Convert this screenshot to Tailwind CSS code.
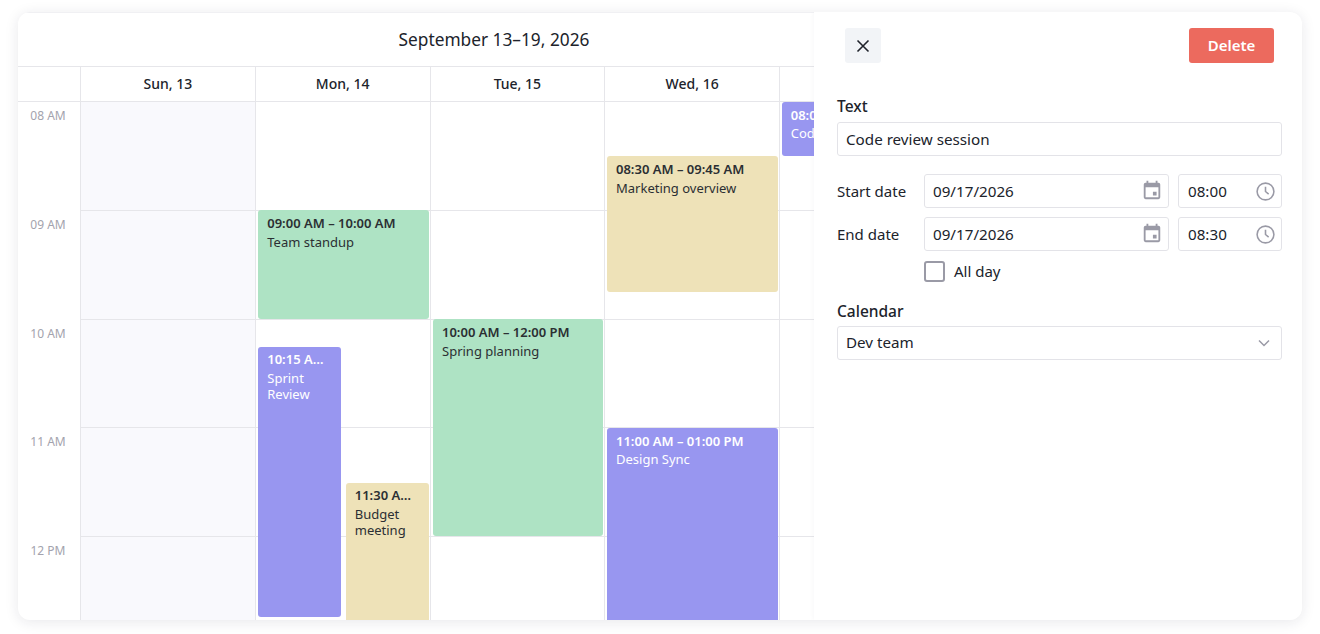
<!DOCTYPE html>
<html lang="en">
<head>
<meta charset="utf-8">
<title>Scheduler</title>
<script src="https://cdn.jsdelivr.net/npm/@tailwindcss/browser@4"></script>
</head>
<body class="bg-white overflow-hidden font-['Noto_Sans',sans-serif] text-[#20232b]">
<div class="w-[1320px] h-[634px] pt-[12px] px-[18px]">
  <!-- Card -->
  <div class="relative w-[1284px] h-[608px] rounded-xl bg-white overflow-hidden shadow-[0_2px_14px_rgba(30,30,60,0.10)]">
    <!-- Title -->
    <div class="w-[952px] h-[54px] flex items-center justify-center text-[17.3px] border-t border-[#f0f0f3]">September 13–19, 2026</div>

    <!-- Day headers -->
    <div class="flex h-[36px] border-y border-[#e6e6ea] w-[1300px] text-[14px] font-medium">
      <div class="w-[63px] shrink-0 border-r border-[#e6e6ea]"></div>
      <div class="w-[174.75px] shrink-0 border-r border-[#e6e6ea] flex items-center justify-center pb-[1px]">Sun, 13</div>
      <div class="w-[174.75px] shrink-0 border-r border-[#e6e6ea] flex items-center justify-center pb-[1px]">Mon, 14</div>
      <div class="w-[174.75px] shrink-0 border-r border-[#e6e6ea] flex items-center justify-center pb-[1px]">Tue, 15</div>
      <div class="w-[174.75px] shrink-0 border-r border-[#e6e6ea] flex items-center justify-center pb-[1px]">Wed, 16</div>
      <div class="w-[174.75px] shrink-0 flex items-center justify-center pb-[1px]">Thu, 17</div>
    </div>

    <!-- Grid -->
    <div class="flex w-[1300px]">
      <!-- Times -->
      <div class="w-[63px] shrink-0 border-r border-[#e6e6ea] text-[12px] text-[#a3a3ad] text-center pr-[2px]">
        <div class="h-[108.75px] pt-[5px]">08 AM</div>
        <div class="h-[108.75px] pt-[5px]">09 AM</div>
        <div class="h-[108.75px] pt-[5px]">10 AM</div>
        <div class="h-[108.75px] pt-[5px]">11 AM</div>
        <div class="h-[108.75px] pt-[5px]">12 PM</div>
      </div>

      <!-- Sun -->
      <div class="relative w-[174.75px] shrink-0 border-r border-[#e6e6ea] bg-[#f9f9fd]">
        <div class="h-[108.75px] border-b border-[#e6e6ea]"></div>
        <div class="h-[108.75px] border-b border-[#e6e6ea]"></div>
        <div class="h-[108.75px] border-b border-[#e6e6ea]"></div>
        <div class="h-[108.75px] border-b border-[#e6e6ea]"></div>
        <div class="h-[108.75px]"></div>
      </div>

      <!-- Mon -->
      <div class="relative w-[174.75px] shrink-0 border-r border-[#e6e6ea]">
        <div class="h-[108.75px] border-b border-[#e6e6ea]"></div>
        <div class="h-[108.75px] border-b border-[#e6e6ea]"></div>
        <div class="h-[108.75px] border-b border-[#e6e6ea]"></div>
        <div class="h-[108.75px] border-b border-[#e6e6ea]"></div>
        <div class="h-[108.75px]"></div>
        <div class="absolute left-[2.5px] top-[108px] w-[171px] h-[109px] rounded-[3px] bg-[#aee3c4] px-[9px] pt-[5px] text-[13px] leading-[16px] text-[#2b2f33]">
          <div class="font-semibold mb-[3px]">09:00 AM – 10:00 AM</div>
          <div>Team standup</div>
        </div>
        <div class="absolute left-[2.5px] top-[245px] w-[83px] h-[270px] rounded-[3px] bg-[#9896f0] px-[9px] pt-[4px] text-[13px] leading-[16px] text-white">
          <div class="font-semibold mb-[3px] truncate">10:15 AM – 12:45 PM</div>
          <div>Sprint Review</div>
        </div>
        <div class="absolute left-[90px] top-[381px] w-[83px] h-[200px] rounded-[3px] bg-[#eee2b8] px-[9px] pt-[4px] text-[13px] leading-[16px] text-[#2b2f33]">
          <div class="font-semibold mb-[3px] truncate">11:30 AM – 01:00 PM</div>
          <div>Budget meeting</div>
        </div>
      </div>

      <!-- Tue -->
      <div class="relative w-[174.75px] shrink-0 border-r border-[#e6e6ea]">
        <div class="h-[108.75px] border-b border-[#e6e6ea]"></div>
        <div class="h-[108.75px] border-b border-[#e6e6ea]"></div>
        <div class="h-[108.75px] border-b border-[#e6e6ea]"></div>
        <div class="h-[108.75px] border-b border-[#e6e6ea]"></div>
        <div class="h-[108.75px]"></div>
        <div class="absolute left-[2.5px] top-[217px] w-[170px] h-[217px] rounded-[3px] bg-[#aee3c4] px-[9px] pt-[5px] text-[13px] leading-[16px] text-[#2b2f33]">
          <div class="font-semibold mb-[3px]">10:00 AM – 12:00 PM</div>
          <div>Spring planning</div>
        </div>
      </div>

      <!-- Wed -->
      <div class="relative w-[174.75px] shrink-0 border-r border-[#e6e6ea]">
        <div class="h-[108.75px] border-b border-[#e6e6ea]"></div>
        <div class="h-[108.75px] border-b border-[#e6e6ea]"></div>
        <div class="h-[108.75px] border-b border-[#e6e6ea]"></div>
        <div class="h-[108.75px] border-b border-[#e6e6ea]"></div>
        <div class="h-[108.75px]"></div>
        <div class="absolute left-[1.75px] top-[54px] w-[171px] h-[136px] rounded-[3px] bg-[#eee2b8] px-[9px] pt-[5px] text-[13px] leading-[16px] text-[#2b2f33]">
          <div class="font-semibold mb-[3px]">08:30 AM – 09:45 AM</div>
          <div>Marketing overview</div>
        </div>
        <div class="absolute left-[1.75px] top-[326px] w-[171px] h-[218px] rounded-[3px] bg-[#9896f0] px-[9px] pt-[5px] text-[13px] leading-[16px] text-white">
          <div class="font-semibold mb-[2px]">11:00 AM – 01:00 PM</div>
          <div>Design Sync</div>
        </div>
      </div>

      <!-- Thu -->
      <div class="relative w-[174.75px] shrink-0">
        <div class="h-[108.75px] border-b border-[#e6e6ea]"></div>
        <div class="h-[108.75px] border-b border-[#e6e6ea]"></div>
        <div class="h-[108.75px] border-b border-[#e6e6ea]"></div>
        <div class="h-[108.75px] border-b border-[#e6e6ea]"></div>
        <div class="h-[108.75px]"></div>
        <div class="absolute left-[1.75px] top-0 w-[171px] h-[54px] rounded-[3px] bg-[#9896f0] px-[9px] pt-[5px] text-[13px] leading-[16px] text-white">
          <div class="font-semibold mb-[2px]">08:00 AM – 08:30 AM</div>
          <div>Code review session</div>
        </div>
      </div>
    </div>

    <!-- Edit panel -->
    <div class="absolute right-0 top-0 bottom-0 w-[488px] bg-white rounded-r-xl pl-[23px] pr-[20px] shadow-[-1px_0_4px_rgba(30,30,60,0.03)]">
      <div class="flex justify-between items-center pt-[16px] pl-[8px] pr-[8px]">
        <button class="w-[36px] h-[35px] rounded-[3px] bg-[#f2f4f7] flex items-center justify-center">
          <svg class="w-[14px] h-[14px]" viewBox="0 0 14 14" fill="none" stroke="#20232b" stroke-width="1.6"><path d="M1.5 1.5l11 11M12.5 1.5l-11 11"/></svg>
        </button>
        <button class="w-[85px] h-[35px] rounded-[3px] bg-[#ec6a5e] text-white text-[15px] font-semibold">Delete</button>
      </div>

      <div class="mt-[33px] text-[15.5px] font-medium leading-[20px]">Text</div>
      <input type="text" value="Code review session" class="mt-[6px] block w-[445px] h-[34px] border border-[#e3e3e8] rounded-[3px] pl-[8px] text-[15.2px] outline-none">

      <div class="mt-[18px] flex items-center h-[34px]">
        <div class="w-[87px] text-[15px] pt-[1px]">Start date</div>
        <div class="relative w-[245px]">
          <input type="text" value="09/17/2026" class="block w-full h-[34px] border border-[#e3e3e8] rounded-[3px] pl-[8px] text-[15.2px] outline-none">
          <svg class="absolute right-[6px] top-[5px] w-[22px] h-[22px]" viewBox="0 0 24 24" fill="#9a9aa6"><path d="M19 4h-1V2h-2v2H8V2H6v2H5a2 2 0 0 0-2 2v14a2 2 0 0 0 2 2h14a2 2 0 0 0 2-2V6a2 2 0 0 0-2-2zm0 16H5V9h14v11zm-6-6h4v4h-4z"/></svg>
        </div>
        <div class="relative w-[104px] ml-[9px]">
          <input type="text" value="08:00" class="block w-full h-[34px] border border-[#e3e3e8] rounded-[3px] pl-[9px] text-[15.2px] outline-none">
          <svg class="absolute right-[6.5px] top-[7px] w-[21px] h-[21px]" viewBox="0 0 20 20" fill="none" stroke="#9a9aa6" stroke-width="1.5"><circle cx="10" cy="10" r="8"/><path d="M10 5.5V10l3 2.5"/></svg>
        </div>
      </div>

      <div class="mt-[9px] flex items-center h-[34px]">
        <div class="w-[87px] text-[15px] pt-[1px]">End date</div>
        <div class="relative w-[245px]">
          <input type="text" value="09/17/2026" class="block w-full h-[34px] border border-[#e3e3e8] rounded-[3px] pl-[8px] text-[15.2px] outline-none">
          <svg class="absolute right-[6px] top-[5px] w-[22px] h-[22px]" viewBox="0 0 24 24" fill="#9a9aa6"><path d="M19 4h-1V2h-2v2H8V2H6v2H5a2 2 0 0 0-2 2v14a2 2 0 0 0 2 2h14a2 2 0 0 0 2-2V6a2 2 0 0 0-2-2zm0 16H5V9h14v11zm-6-6h4v4h-4z"/></svg>
        </div>
        <div class="relative w-[104px] ml-[9px]">
          <input type="text" value="08:30" class="block w-full h-[34px] border border-[#e3e3e8] rounded-[3px] pl-[9px] text-[15.2px] outline-none">
          <svg class="absolute right-[6.5px] top-[7px] w-[21px] h-[21px]" viewBox="0 0 20 20" fill="none" stroke="#9a9aa6" stroke-width="1.5"><circle cx="10" cy="10" r="8"/><path d="M10 5.5V10l3 2.5"/></svg>
        </div>
      </div>

      <div class="mt-[10px] ml-[87px] flex items-center h-[21px]">
        <div class="w-[21px] h-[21px] border-2 border-[#9a9aa6] rounded-[3px]"></div>
        <div class="ml-[9px] text-[15px]">All day</div>
      </div>

      <div class="mt-[19px] text-[15.5px] font-medium leading-[20px]">Calendar</div>
      <div class="relative mt-[5px] w-[445px]">
        <select class="block w-full h-[34px] appearance-none border border-[#e3e3e8] rounded-[3px] pl-[8px] pb-[1px] text-[15.2px] outline-none bg-white">
          <option>Dev team</option>
        </select>
        <svg class="absolute right-[12px] top-[13px] w-[12px] h-[8px]" viewBox="0 0 12 8" fill="none" stroke="#9a9aa6" stroke-width="1.5"><path d="M1 1.5l5 5 5-5"/></svg>
      </div>
    </div>
  </div>
</div>
</body>
</html>
